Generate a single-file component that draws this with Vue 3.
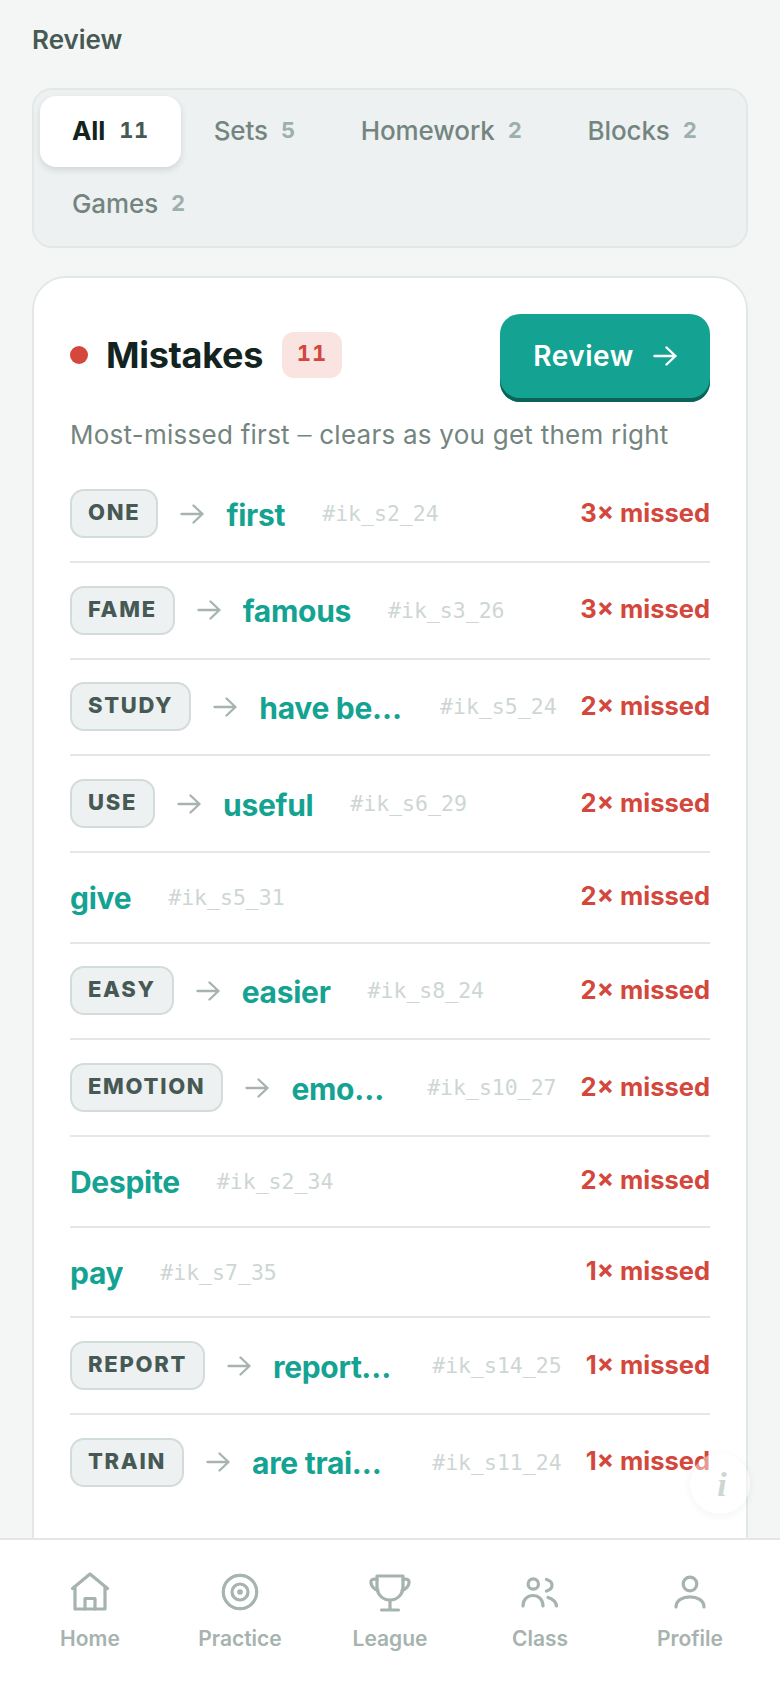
<script setup>
const tabs = [
  { label: 'All', n: 11, active: true },
  { label: 'Sets', n: 5 },
  { label: 'Homework', n: 2 },
  { label: 'Blocks', n: 2 },
  { label: 'Games', n: 2 },
]
const rows = [
  { tag: 'ONE', word: 'first', id: '#ik_s2_24', n: 3 },
  { tag: 'FAME', word: 'famous', id: '#ik_s3_26', n: 3 },
  { tag: 'STUDY', word: 'have been studying', id: '#ik_s5_24', n: 2 },
  { tag: 'USE', word: 'useful', id: '#ik_s6_29', n: 2 },
  { word: 'give', id: '#ik_s5_31', n: 2 },
  { tag: 'EASY', word: 'easier', id: '#ik_s8_24', n: 2 },
  { tag: 'EMOTION', word: 'emotional', id: '#ik_s10_27', n: 2 },
  { word: 'Despite', id: '#ik_s2_34', n: 2 },
  { word: 'pay', id: '#ik_s7_35', n: 1 },
  { tag: 'REPORT', word: 'reported', id: '#ik_s14_25', n: 1 },
  { tag: 'TRAIN', word: 'are training', id: '#ik_s11_24', n: 1 },
]
const nav = ['Home', 'Practice', 'League', 'Class', 'Profile']
</script>

<template>
  <div class="page">
    <main class="content">
      <h1 class="title">Review</h1>
      <div class="tabs">
        <div v-for="t in tabs" :key="t.label" class="tab" :class="{ active: t.active }">
          <span>{{ t.label }}</span><span class="count">{{ t.n }}</span>
        </div>
      </div>
      <section class="card">
        <div class="head">
          <div class="head-left">
            <span class="dot"></span>
            <h2>Mistakes</h2>
            <span class="badge">11</span>
          </div>
          <button class="cta">
            <span>Review</span>
            <svg width="24" height="24" viewBox="0 0 24 24" fill="none" stroke="#fff" stroke-width="2.4" stroke-linecap="round" stroke-linejoin="round"><path d="M1.500 12H22.500M13.500 3.500 22.500 12 13.500 20.500"/></svg>
          </button>
        </div>
        <p class="sub">Most-missed first <span class="dash">—</span> clears as you get them right</p>
        <ul class="list">
          <li v-for="r in rows" :key="r.id" class="row">
            <div class="left">
              <template v-if="r.tag">
                <span class="tag">{{ r.tag }}</span>
                <svg class="arrow" width="24" height="24" viewBox="0 0 24 24" fill="none" stroke="#a6b3af" stroke-width="2.300" stroke-linecap="round" stroke-linejoin="round"><path d="M1.500 12H22.500M13.500 3.500 22.500 12 13.500 20.500"/></svg>
              </template>
              <span class="word">{{ r.word }}</span>
              <span class="rid">{{ r.id }}</span>
            </div>
            <span class="missed">{{ r.n }}× missed</span>
          </li>
        </ul>
      </section>
    </main>

    <div class="info"><i>i</i></div>

    <nav class="nav">
      <div v-for="(n, i) in nav" :key="n" class="nav-item">
        <svg width="48" height="48" viewBox="0 0 48 48" fill="none" stroke="#a6b3af" stroke-width="3.200" stroke-linecap="round" stroke-linejoin="round">
          <template v-if="i === 0">
            <path d="M6.500 20.500 24 6l17.500 14.500M9 18.500V41h30V18.500"/><path d="M19 41V30.500h10V41"/>
          </template>
          <template v-else-if="i === 1">
            <circle cx="24" cy="24" r="16.700"/><circle cx="24" cy="24" r="8"/><circle cx="24" cy="24" r="2.800" fill="#a6b3af" stroke="none"/>
          </template>
          <template v-else-if="i === 2">
            <path d="M11 8h26v10.500C37 26.500 31.500 32 24 32s-13-5.500-13-13.500z"/><path d="M11 11.500c-4-1-6.500 0-6 3.500.5 3.500 3 6 7 7.500M37 11.500c4-1 6.500 0 6 3.500-.5 3.500-3 6-7 7.500M24 32v10M15.500 42h17"/>
          </template>
          <template v-else-if="i === 3">
            <circle cx="17.300" cy="16" r="5.200"/><path d="M30.500 11.500c3.500 1 5.500 3 5.500 5.500s-2 5-5.500 6M7 38c0-14 20-14 20 0M32 29.500c5 1.500 8 4.500 8.500 8.500"/>
          </template>
          <template v-else>
            <circle cx="24" cy="16" r="6.800"/><path d="M10 39c0-13.500 28-13.500 28 0"/>
          </template>
        </svg>
        <span>{{ n }}</span>
      </div>
    </nav>
  </div>
</template>

<style>
html, body { margin: 0; background: #f4f6f5; }
</style>

<style scoped>
* { box-sizing: border-box; }
.page {
  width: 780px;
  height: 1688px;
  position: relative;
  overflow: hidden;
  display: flex;
  flex-direction: column;
  background: #f4f6f5;
  font-family: Inter, "Noto Sans", sans-serif;
}
.content {
  flex: 1;
  min-height: 0;
  overflow: hidden;
  padding: 25px 32px 0;
}
.title {
  margin: 0;
  font-size: 26px;
  line-height: 30px;
  font-weight: 600;
  color: #475954;
}
.tabs {
  margin-top: 33px;
  display: flex;
  flex-wrap: wrap;
  gap: 2px 1px;
  padding: 6px;
  height: 160px;
  align-content: flex-start;
  background: #eef1f2;
  border: 2px solid #e3e8e7;
  border-radius: 20px;
}
.tab {
  height: 71px;
  padding: 0 32px 2px;
  display: flex;
  align-items: center;
  gap: 13px;
  font-size: 26px;
  letter-spacing: -0.1px;
  font-weight: 500;
  color: #748580;
  border-radius: 16px;
}
.tab.active {
  background: #fff;
  color: #132320;
  font-weight: 700;
  gap: 14px;
  box-shadow: 0 3px 6px rgba(30, 50, 45, 0.14);
}
.count {
  font-size: 22px;
  font-weight: 700;
  color: #9fafab;
  font-variant-numeric: tabular-nums;
  letter-spacing: 0.5px;
  position: relative;
  top: -1px;
}
.active .count { color: #475954; }
.card {
  margin-top: 28px;
  background: #fff;
  border: 2px solid #e3e8e7;
  border-radius: 34px 34px 0 0;
  padding: 36px 36px 60px;
  height: 1300px;
}
.head { display: flex; align-items: flex-start; justify-content: space-between; }
.head-left { display: flex; align-items: center; height: 82px; }
.dot { width: 18px; height: 18px; border-radius: 50%; background: #d3473d; margin-right: 18px; }
h2 { margin: 0 19px 1px 0; font-size: 36px; line-height: 44px; font-weight: 700; color: #132320; letter-spacing: -0.3px; }
.badge {
  width: 60px; height: 46px;
  background: #f9e4e2; color: #d3473d;
  border-radius: 12px;
  display: flex; align-items: center; justify-content: center;
  padding-bottom: 4px;
  font-size: 22px; font-weight: 700; letter-spacing: 1px;
  font-variant-numeric: tabular-nums;
}
.cta {
  width: 210px; height: 88px;
  border: 0;
  border-radius: 20px;
  background: #14a392;
  box-shadow: inset 0 -4px 0 #0b6358;
  color: #fff;
  font: 600 28px Inter, sans-serif;
  letter-spacing: 0.5px;
  display: flex; align-items: center; justify-content: center; gap: 19px;
  padding: 0 0 4px;
}
.sub { margin: 16px 0 0; font-size: 26px; line-height: 34px; color: #748580; letter-spacing: 0.25px; }
.dash { font-size: 14px; font-weight: 600; position: relative; top: -4px; }
.list { list-style: none; margin: 10.5px 0 0; padding: 0; }
.row {
  display: flex;
  align-items: center;
  justify-content: space-between;
  gap: 24px;
  padding: 22.8px 0;
  border-bottom: 2px solid #e3e8e7;
}
.row:last-child { border-bottom: 0; }
.left { display: flex; align-items: center; gap: 22px; min-width: 0; flex: 1; min-height: 43.2px; }
.tag {
  flex: none;
  height: 49px;
  padding: 0 16px 3px;
  display: flex; align-items: center;
  background: #eef1f2;
  border: 2px solid #d3dcda;
  border-radius: 14px;
  font-size: 22px; font-weight: 800; letter-spacing: 1.700px;
  color: #475954;
}
.arrow { flex: none; }
.word {
  margin-top: 2px;
  font-size: 30px; font-weight: 700; color: #14a392;
  letter-spacing: -0.3px;
  white-space: nowrap; overflow: hidden; text-overflow: ellipsis;
  min-width: 0;
}
.rid {
  flex: none;
  margin-left: 15px;
  font-family: "DejaVu Sans Mono", monospace;
  font-size: 21.500px;
  color: #ced6d4;
}
.missed { flex: none; font-size: 25.500px; font-weight: 700; color: #d3473d; white-space: nowrap; margin-bottom: 3px; }
.info {
  position: absolute;
  left: 690px; top: 1453px;
  width: 60px; height: 61px;
  border-radius: 50%;
  background: rgba(255, 255, 255, 0.45);
  box-shadow: 0 2px 8px rgba(30, 50, 45, 0.06);
  display: flex; align-items: center; justify-content: center;
  padding: 3px 0 0 4px;
  font: italic 700 34px "Liberation Serif", serif;
  color: #ced6d4;
}
.nav {
  flex: none;
  height: 150px;
  background: #fff;
  border-top: 2px solid #e3e8e7;
  display: grid;
  grid-template-columns: repeat(5, 1fr);
  padding: 28px 15px 0;
  position: relative;
}
.nav-item {
  display: flex; flex-direction: column; align-items: center;
  gap: 11px;
  font-size: 21px; line-height: 24px; font-weight: 600; color: #a6b3af;
}
</style>
